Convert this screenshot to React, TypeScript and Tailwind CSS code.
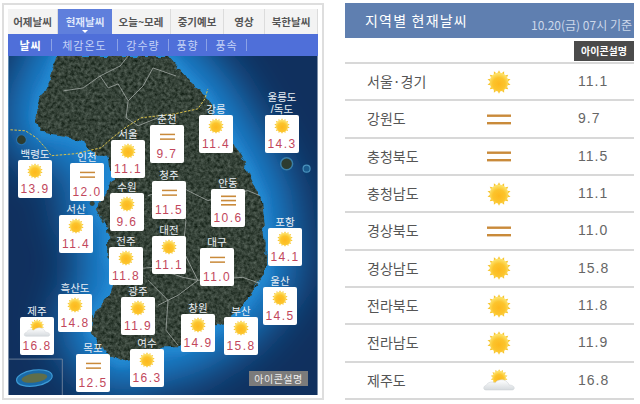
const FONT = '"Noto Sans CJK KR", "Noto Sans", sans-serif';

const LAND =
  'M50 0 L42 23 L33 40 L28 60 L33 77 L57 80 L78 87 L88 100 L100 100 L104 120 L97 140 L87 153 L100 173 L100 200 L107 220 L100 240 L87 257 L83 277 L100 300 L113 307 L157 293 L173 293 L217 267 L233 253 L257 220 L258 187 L253 143 L240 113 L220 80 L197 40 L177 20 L160 0 Z';

type Kind = 'sun' | 'flat' | 'fog' | 'cloud';

const tabs = [
  { name: '어제날씨', w: 'w-[50px]' },
  { name: '현재날씨', w: 'w-[54px]', active: true },
  { name: '오늘~모레', w: 'w-[59px]' },
  { name: '중기예보', w: 'w-[53px]' },
  { name: '영상', w: 'w-[41px]' },
  { name: '북한날씨', w: 'w-[53px]' },
];

const subTabs = [
  { name: '날씨', w: 'w-[42px]', bold: true },
  { name: '체감온도', w: 'w-[66px]' },
  { name: '강수량', w: 'w-[51px]' },
  { name: '풍향', w: 'w-[38px]' },
  { name: '풍속', w: 'w-[40px]' },
];

const cards: { name: string; x: string; temp: string; kind: Kind; pos: string }[] = [
  { name: '백령도', x: '', temp: '13.9', kind: 'sun', pos: 'left-[10px] top-[104px]' },
  { name: '인천', x: '', temp: '12.0', kind: 'flat', pos: 'left-[62px] top-[107px]' },
  { name: '서울', x: '', temp: '11.1', kind: 'sun', pos: 'left-[103px] top-[84px]' },
  { name: '수원', x: '', temp: '9.6', kind: 'sun', pos: 'left-[102px] top-[137px]' },
  { name: '춘천', x: '', temp: '9.7', kind: 'flat', pos: 'left-[142px] top-[69px]' },
  { name: '청주', x: '', temp: '11.5', kind: 'flat', pos: 'left-[144px] top-[125px]' },
  { name: '강릉', x: '', temp: '11.4', kind: 'sun', pos: 'left-[191px] top-[59px]' },
  { name: '울릉도', x: '/독도', temp: '14.3', kind: 'sun', pos: 'left-[257px] top-[59px]' },
  { name: '안동', x: '', temp: '10.6', kind: 'fog', pos: 'left-[203px] top-[133px]' },
  { name: '서산', x: '', temp: '11.4', kind: 'sun', pos: 'left-[51px] top-[159px]' },
  { name: '전주', x: '', temp: '11.8', kind: 'sun', pos: 'left-[101px] top-[191px]' },
  { name: '대전', x: '', temp: '11.1', kind: 'sun', pos: 'left-[144px] top-[180px]' },
  { name: '대구', x: '', temp: '11.0', kind: 'flat', pos: 'left-[192px] top-[192px]' },
  { name: '포항', x: '', temp: '14.1', kind: 'sun', pos: 'left-[260px] top-[172px]' },
  { name: '울산', x: '', temp: '14.5', kind: 'sun', pos: 'left-[255px] top-[231px]' },
  { name: '흑산도', x: '', temp: '14.8', kind: 'sun', pos: 'left-[50px] top-[238px]' },
  { name: '광주', x: '', temp: '11.9', kind: 'sun', pos: 'left-[113px] top-[241px]' },
  { name: '창원', x: '', temp: '14.9', kind: 'sun', pos: 'left-[173px] top-[258px]' },
  { name: '부산', x: '', temp: '15.8', kind: 'sun', pos: 'left-[216px] top-[261px]' },
  { name: '제주', x: '', temp: '16.8', kind: 'cloud', pos: 'left-[12px] top-[261px]' },
  { name: '목포', x: '', temp: '12.5', kind: 'flat', pos: 'left-[68px] top-[298px]' },
  { name: '여수', x: '', temp: '16.3', kind: 'sun', pos: 'left-[122px] top-[293px]' },
];

const rows: { name: string; kind: Kind; temp: string }[] = [
  { name: '서울·경기', kind: 'sun', temp: '11.1' },
  { name: '강원도', kind: 'flat', temp: '9.7' },
  { name: '충청북도', kind: 'flat', temp: '11.5' },
  { name: '충청남도', kind: 'sun', temp: '11.1' },
  { name: '경상북도', kind: 'flat', temp: '11.0' },
  { name: '경상남도', kind: 'sun', temp: '15.8' },
  { name: '전라북도', kind: 'sun', temp: '11.8' },
  { name: '전라남도', kind: 'sun', temp: '11.9' },
  { name: '제주도', kind: 'cloud', temp: '16.8' },
];

const RAYS = Array.from({ length: 14 }, (_, i) => (i * 360) / 14);

const Sun = () => (
  <g>
    {RAYS.map(a => (
      <path key={a} d="M10.6 3 L12 0.2 L13.4 3 Z" fill="#f7c531" transform={`rotate(${a} 12 12)`} />
    ))}
    <circle cx="12" cy="12" r="9.4" fill="url(#sunFill)" />
  </g>
);

const WeatherIcon = ({ kind, size }: { kind: Kind; size: number }) => (
  <svg width={size} height={size} viewBox="0 0 24 24" className="block overflow-visible">
    {kind === 'sun' && <Sun />}
    {kind === 'flat' && (
      <g fill="#c98a3a">
        <rect x="0" y="7.5" width="24" height="2.4" />
        <rect x="0" y="15" width="24" height="2.4" />
      </g>
    )}
    {kind === 'fog' && (
      <g fill="#c98a3a">
        <rect x="0" y="4" width="24" height="2.6" />
        <rect x="0" y="10.8" width="24" height="2.6" />
        <rect x="0" y="17.6" width="24" height="2.6" />
      </g>
    )}
    {kind === 'cloud' && (
      <g>
        <g transform="translate(3.5 1) scale(0.72)">
          <Sun />
        </g>
        <path
          d="M-1 22 C-4 22 -4 18 -1 17.5 C1 14 5 13 8 15 C10 11.5 16 11 19 13 C21 14.5 22 16 22 17 C26 17 28 19 27 21 C26.5 22 25 22 24 22 Z"
          fill="url(#cloudFill)"
          stroke="#c9ced3"
          strokeWidth="0.5"
        />
      </g>
    )}
  </svg>
);

const MapArt = () => (
  <svg viewBox="0 0 310 340" className="absolute inset-0 w-full h-full">
    <defs>
      <filter id="glow" x="-40%" y="-40%" width="180%" height="180%">
        <feGaussianBlur stdDeviation="22" />
      </filter>
      <filter id="edge" x="-10%" y="-10%" width="120%" height="120%">
        <feGaussianBlur stdDeviation="4" />
      </filter>
      {/* rough coast + satellite-ish noise */}
      <filter id="terrain" x="-5%" y="-5%" width="110%" height="110%" colorInterpolationFilters="sRGB">
        <feTurbulence type="fractalNoise" baseFrequency="0.07" numOctaves="3" seed="4" result="warp" />
        <feDisplacementMap in="SourceGraphic" in2="warp" scale="11" xChannelSelector="R" yChannelSelector="G" result="shape" />
        <feTurbulence type="fractalNoise" baseFrequency="0.3" numOctaves="3" seed="7" />
        <feColorMatrix
          type="matrix"
          values="0.38 0 0 0 0.02  0.38 0 0 0 0.07  0.38 0 0 0 0.03  0 0 0 0 1"
        />
        <feComposite in2="shape" operator="in" />
      </filter>
    </defs>
    <rect width="310" height="340" fill="#10305e" />
    <path d={LAND} fill="#1f84d2" stroke="#1f84d2" strokeWidth="62" filter="url(#glow)" />
    <path d={LAND} fill="#2288d0" stroke="#2288d0" strokeWidth="10" filter="url(#edge)" />
    <path d={LAND} fill="#2d3c30" filter="url(#terrain)" />
    <g fill="#34443a">
      <circle cx="84" cy="148" r="2.5" />
      <circle cx="82" cy="262" r="3" />
      <circle cx="90" cy="292" r="2.5" />
      <circle cx="128" cy="312" r="3" />
      <circle cx="150" cy="302" r="2.5" />
      <circle cx="200" cy="287" r="3" />
    </g>
    <g fill="none" stroke="#a9b0ab" strokeWidth="0.9" opacity="0.85">
      <path d="M55 35 L75 32 L92 20 L112 10 L120 0" />
      <path d="M92 20 L100 32 L110 28 L120 45 L135 30 L145 12 L168 20" />
      <path d="M120 45 L118 62 L130 70 L150 62" />
      <path d="M140 140 L170 130 L200 145 L240 135 L252 140" />
      <path d="M170 130 L178 165 L175 195 L190 225 L170 240 L150 250" />
      <path d="M110 215 L145 212 L175 222 L190 225 L235 222 L252 228" />
      <path d="M140 225 L160 245 L158 275 L170 290" />
    </g>
    <path
      d="M2 74 L17 75 L28 82 L37 92 L43 100 L67 98 L93 92 L103 83 L117 72 L133 62 L167 58 L190 53 L197 43 L200 33"
      fill="none"
      stroke="#d8c04a"
      strokeWidth="1"
      strokeDasharray="2.5 1.5"
    />
    <circle cx="13" cy="84" r="5" fill="#2d3c30" stroke="#2470ad" strokeWidth="1.2" />
    <circle cx="279" cy="108" r="6" fill="#2d3c30" stroke="#3a7fa8" strokeWidth="1.5" />
    <circle cx="299" cy="113" r="3.5" fill="#1b5c8e" stroke="#4a93bd" strokeWidth="1.2" />
    <path d="M0 304 H54 V340" fill="none" stroke="#7e8ea3" strokeWidth="0.8" />
    <g transform="rotate(-8 26 323)">
      <ellipse cx="26" cy="323" rx="18" ry="8" fill="#1a6aa8" stroke="#3d9bd6" strokeWidth="1.2" />
      <ellipse cx="26" cy="323" rx="13" ry="4.5" fill="#5f6e4a" />
    </g>
  </svg>
);

const MapCard = ({ card }: { card: (typeof cards)[number] }) => (
  <div className={`absolute w-[34px] h-[38px] ${card.pos} bg-white rounded-[2px] flex flex-col items-center`}>
    <div className="absolute bottom-full left-1/2 -translate-x-1/2 whitespace-nowrap text-center text-[10.5px] leading-[12px] text-[#e9eef4] font-['Liberation_Sans','Noto_Sans_CJK_KR',sans-serif]">
      {card.name}
      {card.x && (
        <>
          <br />
          {card.x}
        </>
      )}
    </div>
    <div className="mt-[3px] h-[16px] flex items-center">
      <WeatherIcon kind={card.kind} size={card.kind === 'cloud' ? 20 : card.kind === 'sun' ? 16 : 15} />
    </div>
    <div className="mt-[3px] text-[12px] leading-[14px] tracking-[1.4px] text-[#c2475c] font-['Liberation_Sans']">
      {card.temp}
    </div>
  </div>
);

const App = () => (
  <div className="w-[640px] h-[404px] bg-white overflow-hidden flex items-start pt-[3px] pl-[2px]" style={{ fontFamily: FONT }}>
    <svg className="absolute w-0 h-0">
      <defs>
        <radialGradient id="sunFill" cx="50%" cy="60%" r="55%">
          <stop offset="0%" stopColor="#fdb81e" />
          <stop offset="60%" stopColor="#fcc42c" />
          <stop offset="100%" stopColor="#fde168" />
        </radialGradient>
        <linearGradient id="cloudFill" x1="0" y1="0" x2="0" y2="1">
          <stop offset="0%" stopColor="#ffffff" />
          <stop offset="100%" stopColor="#d5dade" />
        </linearGradient>
      </defs>
    </svg>

    <div className="w-[322px] h-[397px] border-2 border-[#dedede] pt-[4px] px-[4px]">
      <div className="flex h-[25px] bg-[#f3f3f3]">
        {tabs.map(t => (
          <div
            key={t.name}
            className={`${t.w} relative flex items-center justify-center text-[10.5px] font-bold ${
              t.active ? 'bg-[#5f7fdc] text-[#dfe8fb]' : 'text-[#555] border-r border-[#dcdcdc]'
            }`}
          >
            {t.name}
            {t.active && (
              <span className="absolute bottom-[1px] left-1/2 -translate-x-1/2 w-0 h-0 border-x-[3px] border-x-transparent border-t-[3px] border-t-white" />
            )}
          </div>
        ))}
      </div>
      <div className="h-[22px] bg-[#4f6fd9] flex items-center text-[11px] text-[#c5d3f7] tracking-[1px] pl-[2px]">
        {subTabs.map(t => (
          <div
            key={t.name}
            className={`${t.w} h-[12px] leading-[12px] flex items-center justify-center border-r border-[#8ba2e6] ${
              t.bold ? 'font-bold text-white' : ''
            }`}
          >
            {t.name}
          </div>
        ))}
      </div>
      <div className="relative w-[310px] h-[339px] overflow-hidden">
        <MapArt />
        {cards.map(c => (
          <MapCard key={c.name} card={c} />
        ))}
        <div className="absolute left-[241px] top-[315px] w-[59px] h-[15px] bg-[#7b7b7b] text-[#eeeeee] text-[10px] leading-[15px] tracking-[0.5px] text-center">
          아이콘설명
        </div>
      </div>
    </div>

    <div className="ml-[21px] w-[289px]">
      <div className="h-[35px] bg-[#5f7fb0] flex items-center justify-between pl-[20px] pr-[2px]">
        <span className="text-[14px] tracking-[1.2px] text-white whitespace-nowrap">지역별 현재날씨</span>
        <span className="mt-[8px] text-[12px] text-[#ccd8ea] whitespace-nowrap">10.20(금) 07시 기준</span>
      </div>
      <div className="h-[26px] flex justify-end items-start pt-[3px] border-b-2 border-[#d8d8d8]">
        <span className="w-[60px] h-[20px] bg-[#4b4b4b] text-white text-[10px] font-bold leading-[20px] text-center">
          아이콘설명
        </span>
      </div>
      {rows.map(r => (
        <div key={r.name} className="h-[37.33px] flex items-center pl-[22px] border-b-2 border-[#d8d8d8]">
          <span className="w-[120px] text-[14px] text-[#555555]">{r.name}</span>
          <WeatherIcon kind={r.kind} size={24} />
          <span className="ml-[67px] text-[14px] tracking-[1px] text-[#666666] font-['Liberation_Sans']">{r.temp}</span>
        </div>
      ))}
    </div>
  </div>
);

export default App;
